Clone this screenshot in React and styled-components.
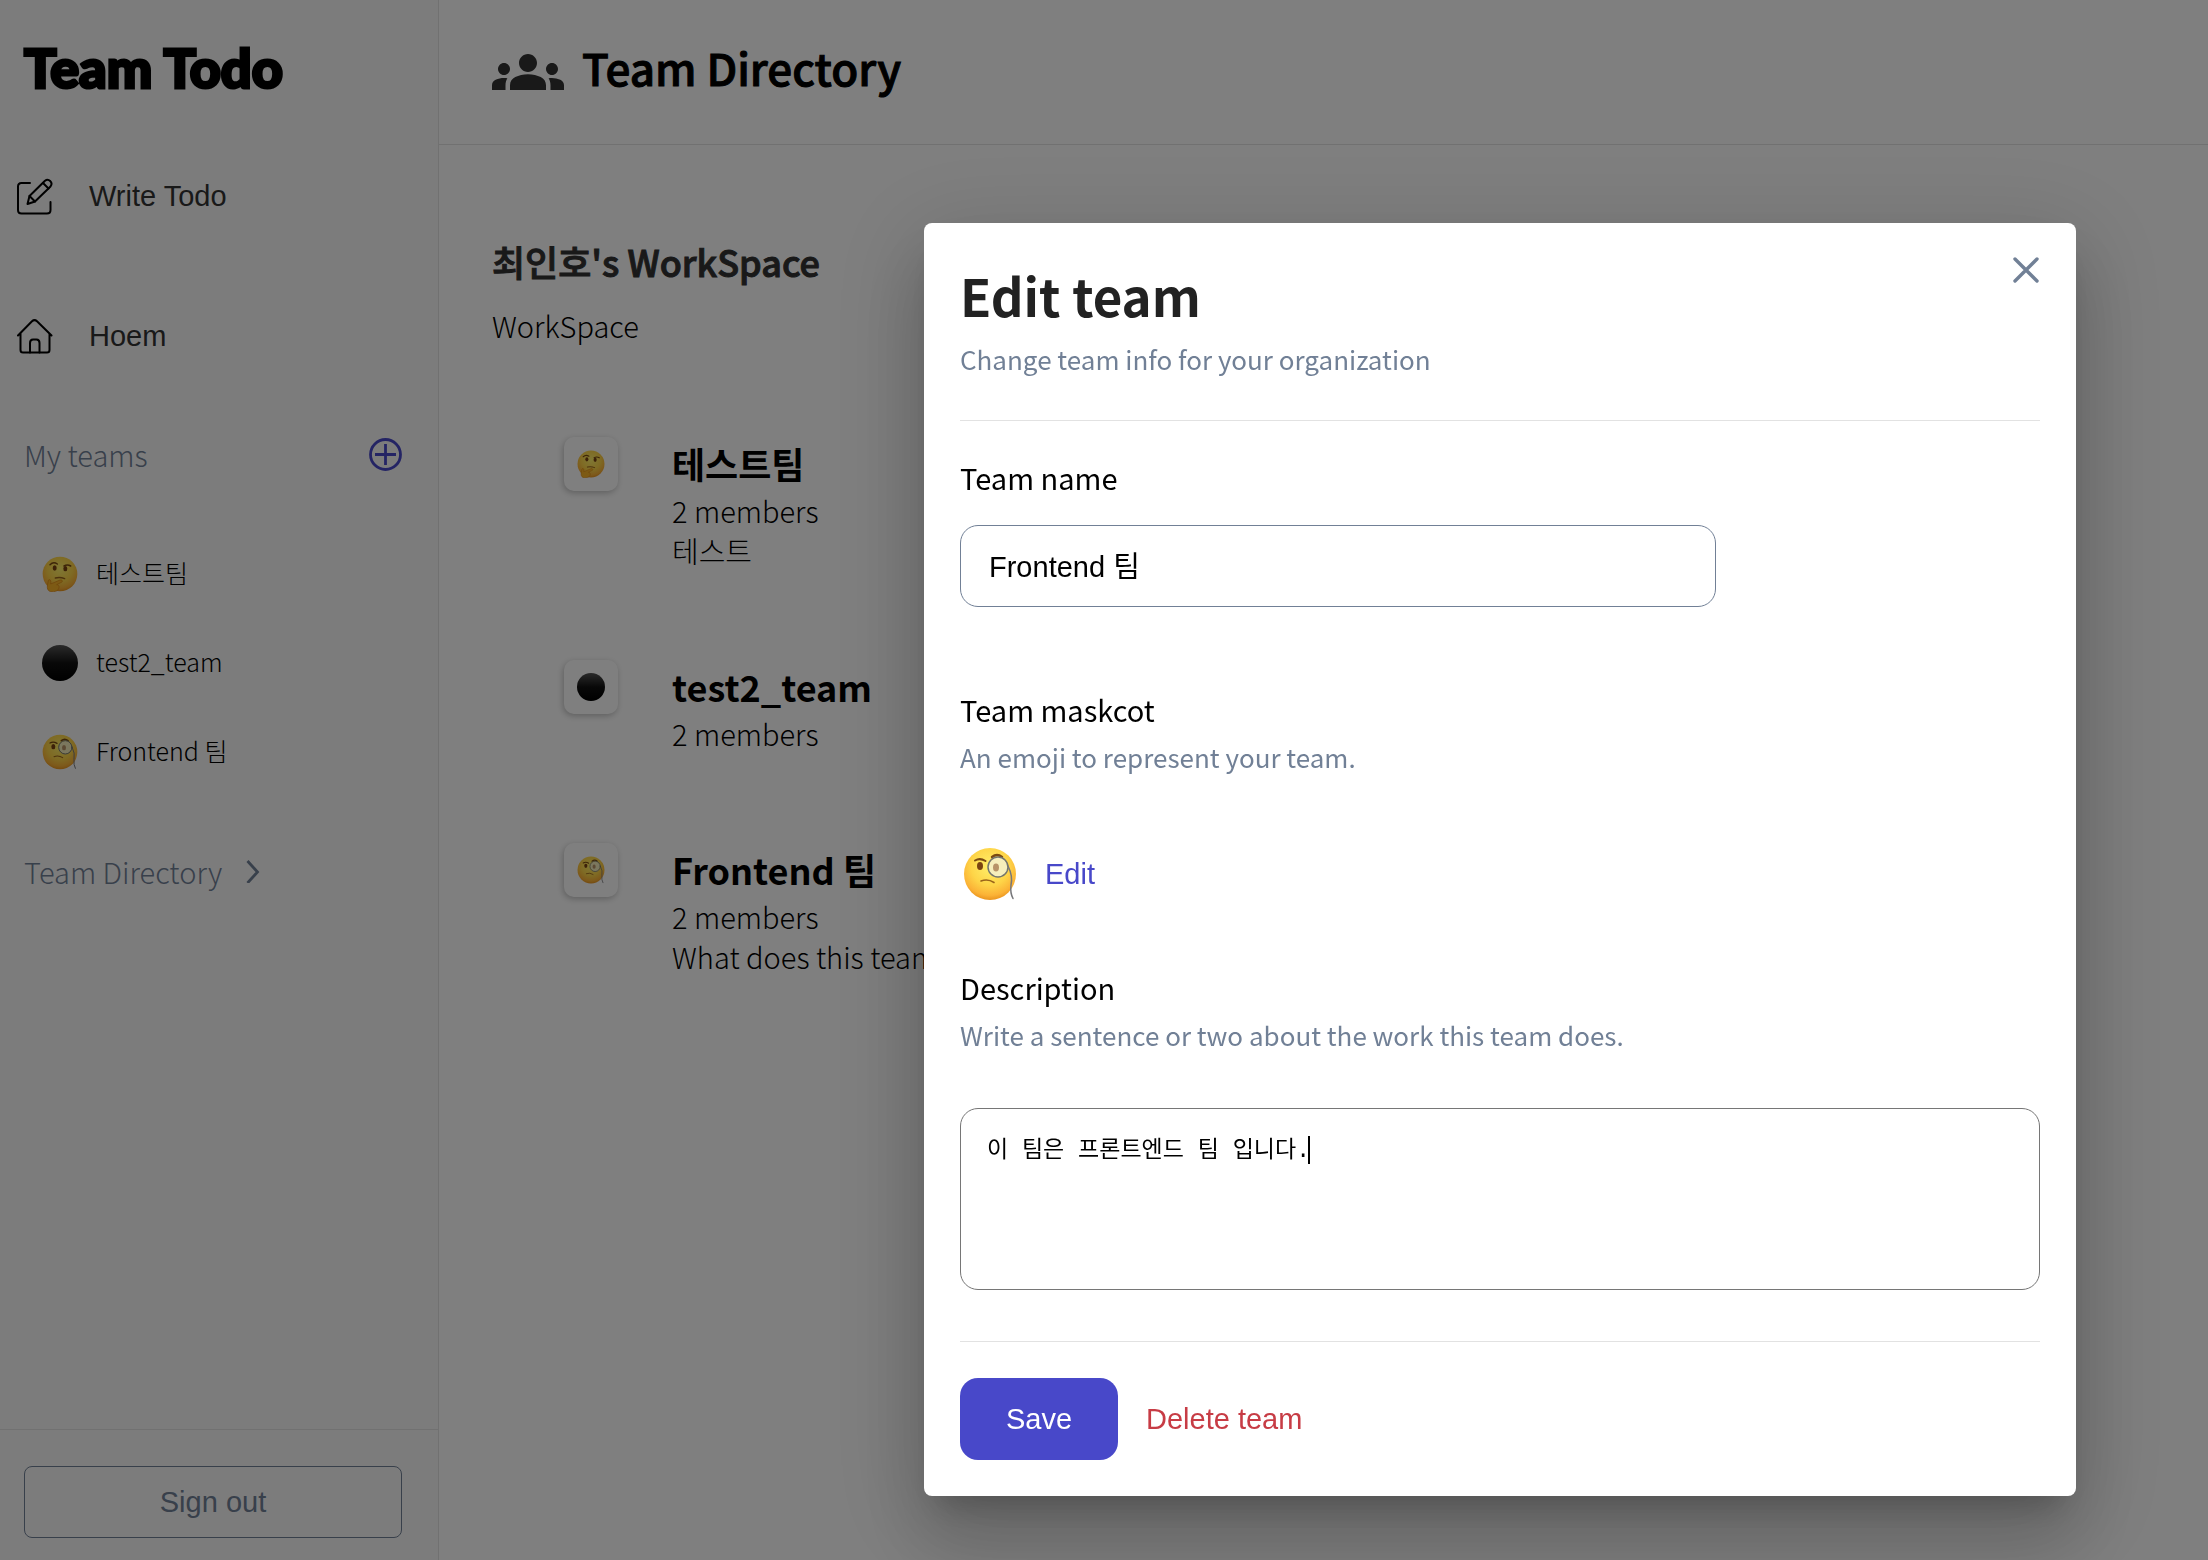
import React from 'react';
import styled, { createGlobalStyle } from 'styled-components';
import { MdGroups } from 'react-icons/md';

const noto = '"Noto Sans CJK KR", "Noto Sans", sans-serif';
const arial = '"Liberation Sans", "Noto Sans CJK KR", sans-serif';
const slate = '#718096';
const indigo = '#4848c9';

const GlobalStyle = createGlobalStyle`
  *, *::before, *::after { box-sizing: border-box; }
  body { margin: 0; background: #fff; color: #000; font-family: ${noto}; }
  h1, h2, h3, p, ul { margin: 0; padding: 0; }
  ul { list-style: none; }
  a { color: inherit; text-decoration: none; }
  button { border: 0; padding: 0; background: none; cursor: pointer; }
  svg { display: block; flex: none; }
`;

const Layout = styled.div`
  display: flex;
  min-height: 100vh;
`;

const Sidebar = styled.aside`
  display: flex;
  flex-direction: column;
  flex: none;
  width: 439px;
  background: #f9f9f9;
  border-right: 1px solid #e2e2e2;
`;

const Logo = styled.h1`
  padding: 32px 24px 22px;
  font: 900 54px/72px Lato, sans-serif;
  -webkit-text-stroke: 3px #000;
`;

const NavLink = styled.a`
  display: flex;
  align-items: center;
  gap: 36px;
  height: 140px;
  padding-left: 16px;
  color: #333;
  font: 29px/40px ${arial};
  svg { color: #000; }
`;

const SectionRow = styled.div`
  display: flex;
  align-items: center;
  justify-content: ${(p) => (p.$spread ? 'space-between' : 'flex-start')};
  height: 96px;
  padding: 0 36px 0 24px;
  color: ${slate};
  font-size: 29px;
  font-weight: 300;
  line-height: 40px;
  h2, a { font: inherit; }
  a { display: flex; align-items: center; gap: 24px; }
  button { color: ${indigo}; }
`;

const TeamLinks = styled.ul`
  padding: 27px 0;
`;

const TeamLink = styled.a`
  display: flex;
  align-items: center;
  gap: 18px;
  height: 89px;
  padding-left: 42px;
  font-size: 25px;
  font-weight: 300;
  line-height: 36px;
`;

const TeamLinkText = styled.span`
  padding-bottom: 4px;
`;

const SidebarFooter = styled.div`
  margin-top: auto;
  padding: 36px 36px 22px 24px;
  border-top: 1px solid #e2e2e2;
`;

const SignOut = styled.button`
  width: 100%;
  height: 72px;
  border: 1px solid ${slate};
  border-radius: 8px;
  color: ${slate};
  font: 29px ${arial};
`;

const Main = styled.main`
  flex: 1;
  min-width: 0;
`;

const Header = styled.header`
  display: flex;
  align-items: center;
  gap: 18px;
  height: 145px;
  padding-left: 53px;
  border-bottom: 1px solid #e2e2e2;
  svg { color: #333; }
`;

const PageTitle = styled.h1`
  padding-bottom: 10px;
  font-size: 44px;
  font-weight: 500;
  line-height: 60px;
  -webkit-text-stroke: 1px #000;
`;

const Content = styled.section`
  padding: 90px 53px;
`;

const WorkspaceName = styled.h2`
  color: #333;
  font-size: 36px;
  font-weight: 500;
  line-height: 52px;
  -webkit-text-stroke: 1px #333;
`;

const Light = styled.p`
  font-size: 29px;
  font-weight: 300;
  line-height: 40px;
`;

const WorkspaceInfo = styled.div`
  display: grid;
  gap: 18px;
`;

const TeamList = styled.ul`
  display: grid;
  gap: 90px;
  margin-top: 92px;
  padding-left: 72px;
`;

const TeamItem = styled.li`
  display: flex;
  align-items: flex-start;
  gap: 54px;
`;

const Mascot = styled.div`
  display: grid;
  place-items: center;
  width: 54px;
  height: 54px;
  border-radius: 10px;
  background: #fff;
  box-shadow: -1px 2px 6px rgba(0, 0, 0, 0.25);
`;

const TeamName = styled.h3`
  font-size: 36px;
  font-weight: 700;
  line-height: 53px;
`;

const Overlay = styled.div`
  position: fixed;
  inset: 0;
  display: flex;
  align-items: flex-start;
  justify-content: flex-end;
  padding: 223px 132px 0;
  background: rgba(0, 0, 0, 0.5);
`;

const Dialog = styled.form`
  position: relative;
  width: 1152px;
  max-width: 100%;
  padding: 36px;
  border-radius: 8px;
  background: #fff;
  box-shadow: 0 22px 30px -14px rgba(0, 0, 0, 0.2), 0 48px 76px 6px rgba(0, 0, 0, 0.14),
    0 18px 92px 16px rgba(0, 0, 0, 0.12);
`;

const Close = styled.button`
  position: absolute;
  top: 28px;
  right: 32px;
  color: ${slate};
`;

const DialogTitle = styled.h2`
  padding-bottom: 2px;
  color: #222;
  font-size: 51px;
  font-weight: 700;
  line-height: 72px;
`;

const Hint = styled.p`
  margin-top: 8px;
  color: ${slate};
  font-size: 26px;
  line-height: 36px;
`;

const DialogHead = styled.header`
  padding-bottom: 43px;
  border-bottom: 1px solid #e2e2e2;
`;

const Field = styled.div`
  padding-top: ${(p) => p.$top}px;
`;

const Label = styled.label`
  display: block;
  font-size: 29px;
  font-weight: 400;
  line-height: 44px;
`;

const NameInput = styled.input`
  display: block;
  width: 70%;
  height: 82px;
  margin-top: 26px;
  padding: 0 28px 4px;
  border: 1px solid ${slate};
  border-radius: 18px;
  background: #fff;
  color: #000;
  font: 29px ${arial};
  outline: 0;
`;

const MascotPicker = styled.div`
  display: flex;
  align-items: center;
  gap: 28px;
  margin-top: 72px;
  padding-left: 3px;
`;

const TextButton = styled.button`
  color: ${(p) => p.$color};
  font: 29px/40px ${arial};
`;

const TextBox = styled.div`
  position: relative;
  margin-top: 55px;
`;

const TextArea = styled.textarea`
  display: block;
  width: 100%;
  height: 182px;
  padding: 26px;
  border: 1px solid #767676;
  border-radius: 18px;
  color: #000;
  font: 23px/32px "Liberation Mono", "Noto Sans CJK KR", monospace;
  resize: none;
  outline: 0;
`;

const Caret = styled.span`
  position: absolute;
  top: 28px;
  left: 348px;
  width: 2px;
  height: 28px;
  background: #000;
`;

const Actions = styled.footer`
  display: flex;
  align-items: center;
  gap: 28px;
  margin-top: 51px;
  padding-top: 36px;
  border-top: 1px solid #e2e2e2;
`;

const Save = styled.button`
  width: 158px;
  height: 82px;
  border-radius: 18px;
  background: ${indigo};
  color: #fff;
  font: 29px ${arial};
`;

const stroke = { fill: 'none', stroke: 'currentColor', strokeLinecap: 'round', strokeLinejoin: 'round' };

const EditIcon = () => (
  <svg width="37" height="37" viewBox="0 0 37 37" {...stroke} strokeWidth="2">
    <path d="M14 5H5.500Q2 5 2 8.500V32Q2 35.500 5.500 35.500H31Q34.500 35.500 34.500 32V24" />
    <path d="M11.500 26L13.500 18L29 2.800C32.500 -.1 37.500 4.500 34.500 8.500L19 23.500Z" />
    <path d="M13.500 18L19 23.500M27 5L32.500 10.500" />
  </svg>
);

const HomeIcon = () => (
  <svg width="37" height="37" viewBox="0 0 37 37" {...stroke} strokeWidth="2">
    <path d="M2 17.500L16 3.200Q18.500 1 21 3.200L35.500 17.500M4.500 15.500V32Q4.500 34.500 7 34.500H31Q33.500 34.500 33.500 32V15.500" />
    <path d="M14 34.500V25Q14 21.500 17 21.500H20.500Q23.500 21.500 23.500 25V34.500" />
  </svg>
);

const PlusCircle = () => (
  <svg width="33" height="33" viewBox="0 0 33 33" fill="none" stroke="currentColor" strokeWidth="2.8">
    <circle cx="16.500" cy="16.500" r="15" />
    <path d="M16.500 6V27M6 16.500H27" />
  </svg>
);

const Chevron = () => (
  <svg width="14" height="24" viewBox="0 0 14 24" fill="none" stroke="currentColor" strokeWidth="2.800">
    <path d="M1.500 2L11.500 13L1.500 24" />
  </svg>
);

const CloseIcon = () => (
  <svg width="38" height="38" viewBox="0 0 38 38" {...stroke} strokeWidth="3.400">
    <path d="M9 8L31 30M31 8L9 30" />
  </svg>
);

const Emoji = ({ kind, size }) => (
  <svg width={size} height={size} viewBox="0 0 54 54" fill="none" strokeLinecap="round">
    <defs>
      <radialGradient id="face" cx="50%" cy="35%" r="66%">
        <stop offset="0" stopColor="#fff06a" />
        <stop offset=".55" stopColor="#fed548" />
        <stop offset=".85" stopColor="#fbb236" />
        <stop offset="1" stopColor="#e8921c" />
      </radialGradient>
      <linearGradient id="ball" x1="0" y1="0" x2="0" y2="1">
        <stop offset="0" stopColor="#555" />
        <stop offset=".5" stopColor="#111" />
        <stop offset="1" stopColor="#000" />
      </linearGradient>
    </defs>
    {kind === 'ball' && <circle cx="27" cy="27" r="27" fill="url(#ball)" />}
    {kind !== 'ball' && <circle cx="27" cy="27" r="26" fill="url(#face)" />}
    {kind === 'monocle' && (
      <>
        <path d="M12 13.500Q17 10.500 22.500 14" stroke="#7a4a12" strokeWidth="2" />
        <path d="M29 10Q34 6 39 10" stroke="#7a4a12" strokeWidth="2.400" />
        <ellipse cx="17" cy="19" rx="3" ry="4" fill="#7a4310" />
        <circle cx="35" cy="20" r="10" fill="#f6efbc" stroke="#74766e" strokeWidth="1.500" />
        <ellipse cx="33" cy="20.500" rx="3" ry="4" fill="#b89468" />
        <path d="M18 34Q25 31.500 31 35.500" stroke="#9a641a" strokeWidth="1.600" />
        <path d="M45 19Q50 29 48 38Q47 46 50 51.500" stroke="#77777a" strokeWidth="1.500" />
      </>
    )}
    {kind === 'thinking' && (
      <>
        <path d="M12 13Q17 8 23 12" stroke="#7a4a12" strokeWidth="2.200" />
        <path d="M33 15Q38 12 43 15" stroke="#7a4a12" strokeWidth="2.200" />
        <ellipse cx="19" cy="18" rx="3" ry="4" fill="#7a4310" />
        <ellipse cx="35" cy="19" rx="3" ry="4" fill="#7a4310" />
        <path d="M20 33Q27 31 34 34" stroke="#9a641a" strokeWidth="2" />
        <path
          d="M10 36C12 34 14 37 13 42L27 36C31 35 32 39 28 40L22 43C28 43 26 52 20 53C13 55 7 53 8 45Z"
          fill="#fbb428"
          stroke="#d98414"
          strokeWidth="1"
        />
      </>
    )}
  </svg>
);

const teams = [
  { name: '테스트팀', kind: 'thinking', description: '테스트' },
  { name: 'test2_team', kind: 'ball' },
  { name: 'Frontend 팀', kind: 'monocle', description: 'What does this team do?' },
];

export default function App() {
  return (
    <>
      <GlobalStyle />
      <Layout>
        <Sidebar>
          <Logo>Team Todo</Logo>
          <nav>
            <NavLink href="#write"><EditIcon />Write Todo</NavLink>
            <NavLink href="#home"><HomeIcon />Hoem</NavLink>
          </nav>
          <SectionRow $spread>
            <h2>My teams</h2>
            <button type="button" aria-label="Add team"><PlusCircle /></button>
          </SectionRow>
          <TeamLinks>
            {teams.map((t) => (
              <li key={t.name}>
                <TeamLink href="#team">
                  <Emoji kind={t.kind} size={36} />
                  <TeamLinkText>{t.name}</TeamLinkText>
                </TeamLink>
              </li>
            ))}
          </TeamLinks>
          <SectionRow>
            <a href="#directory">Team Directory <Chevron /></a>
          </SectionRow>
          <SidebarFooter>
            <SignOut type="button">Sign out</SignOut>
          </SidebarFooter>
        </Sidebar>
        <Main>
          <Header>
            <MdGroups size={72} />
            <PageTitle>Team Directory</PageTitle>
          </Header>
          <Content>
            <WorkspaceInfo>
              <WorkspaceName>최인호's WorkSpace</WorkspaceName>
              <Light>WorkSpace</Light>
            </WorkspaceInfo>
            <TeamList>
              {teams.map((t) => (
                <TeamItem key={t.name}>
                  <Mascot><Emoji kind={t.kind} size={28} /></Mascot>
                  <div>
                    <TeamName>{t.name}</TeamName>
                    <Light>2 members</Light>
                    {t.description && <Light>{t.description}</Light>}
                  </div>
                </TeamItem>
              ))}
            </TeamList>
          </Content>
        </Main>
      </Layout>
      <Overlay>
        <Dialog role="dialog" aria-labelledby="dialog-title">
          <Close type="button" aria-label="Close"><CloseIcon /></Close>
          <DialogHead>
            <DialogTitle id="dialog-title">Edit team</DialogTitle>
            <Hint>Change team info for your organization</Hint>
          </DialogHead>
          <Field $top={34}>
            <Label htmlFor="team-name">Team name</Label>
            <NameInput id="team-name" type="text" defaultValue="Frontend 팀" />
          </Field>
          <Field $top={80}>
            <Label as="h3">Team maskcot</Label>
            <Hint>An emoji to represent your team.</Hint>
            <MascotPicker>
              <Emoji kind="monocle" size={54} />
              <TextButton type="button" $color={indigo}>Edit</TextButton>
            </MascotPicker>
          </Field>
          <Field $top={64}>
            <Label htmlFor="description">Description</Label>
            <Hint>Write a sentence or two about the work this team does.</Hint>
            <TextBox>
              <TextArea id="description" spellCheck={false} defaultValue="이 팀은 프론트엔드 팀 입니다." />
              <Caret />
            </TextBox>
          </Field>
          <Actions>
            <Save type="submit">Save</Save>
            <TextButton type="button" $color="#c73c45">Delete team</TextButton>
          </Actions>
        </Dialog>
      </Overlay>
    </>
  );
}
